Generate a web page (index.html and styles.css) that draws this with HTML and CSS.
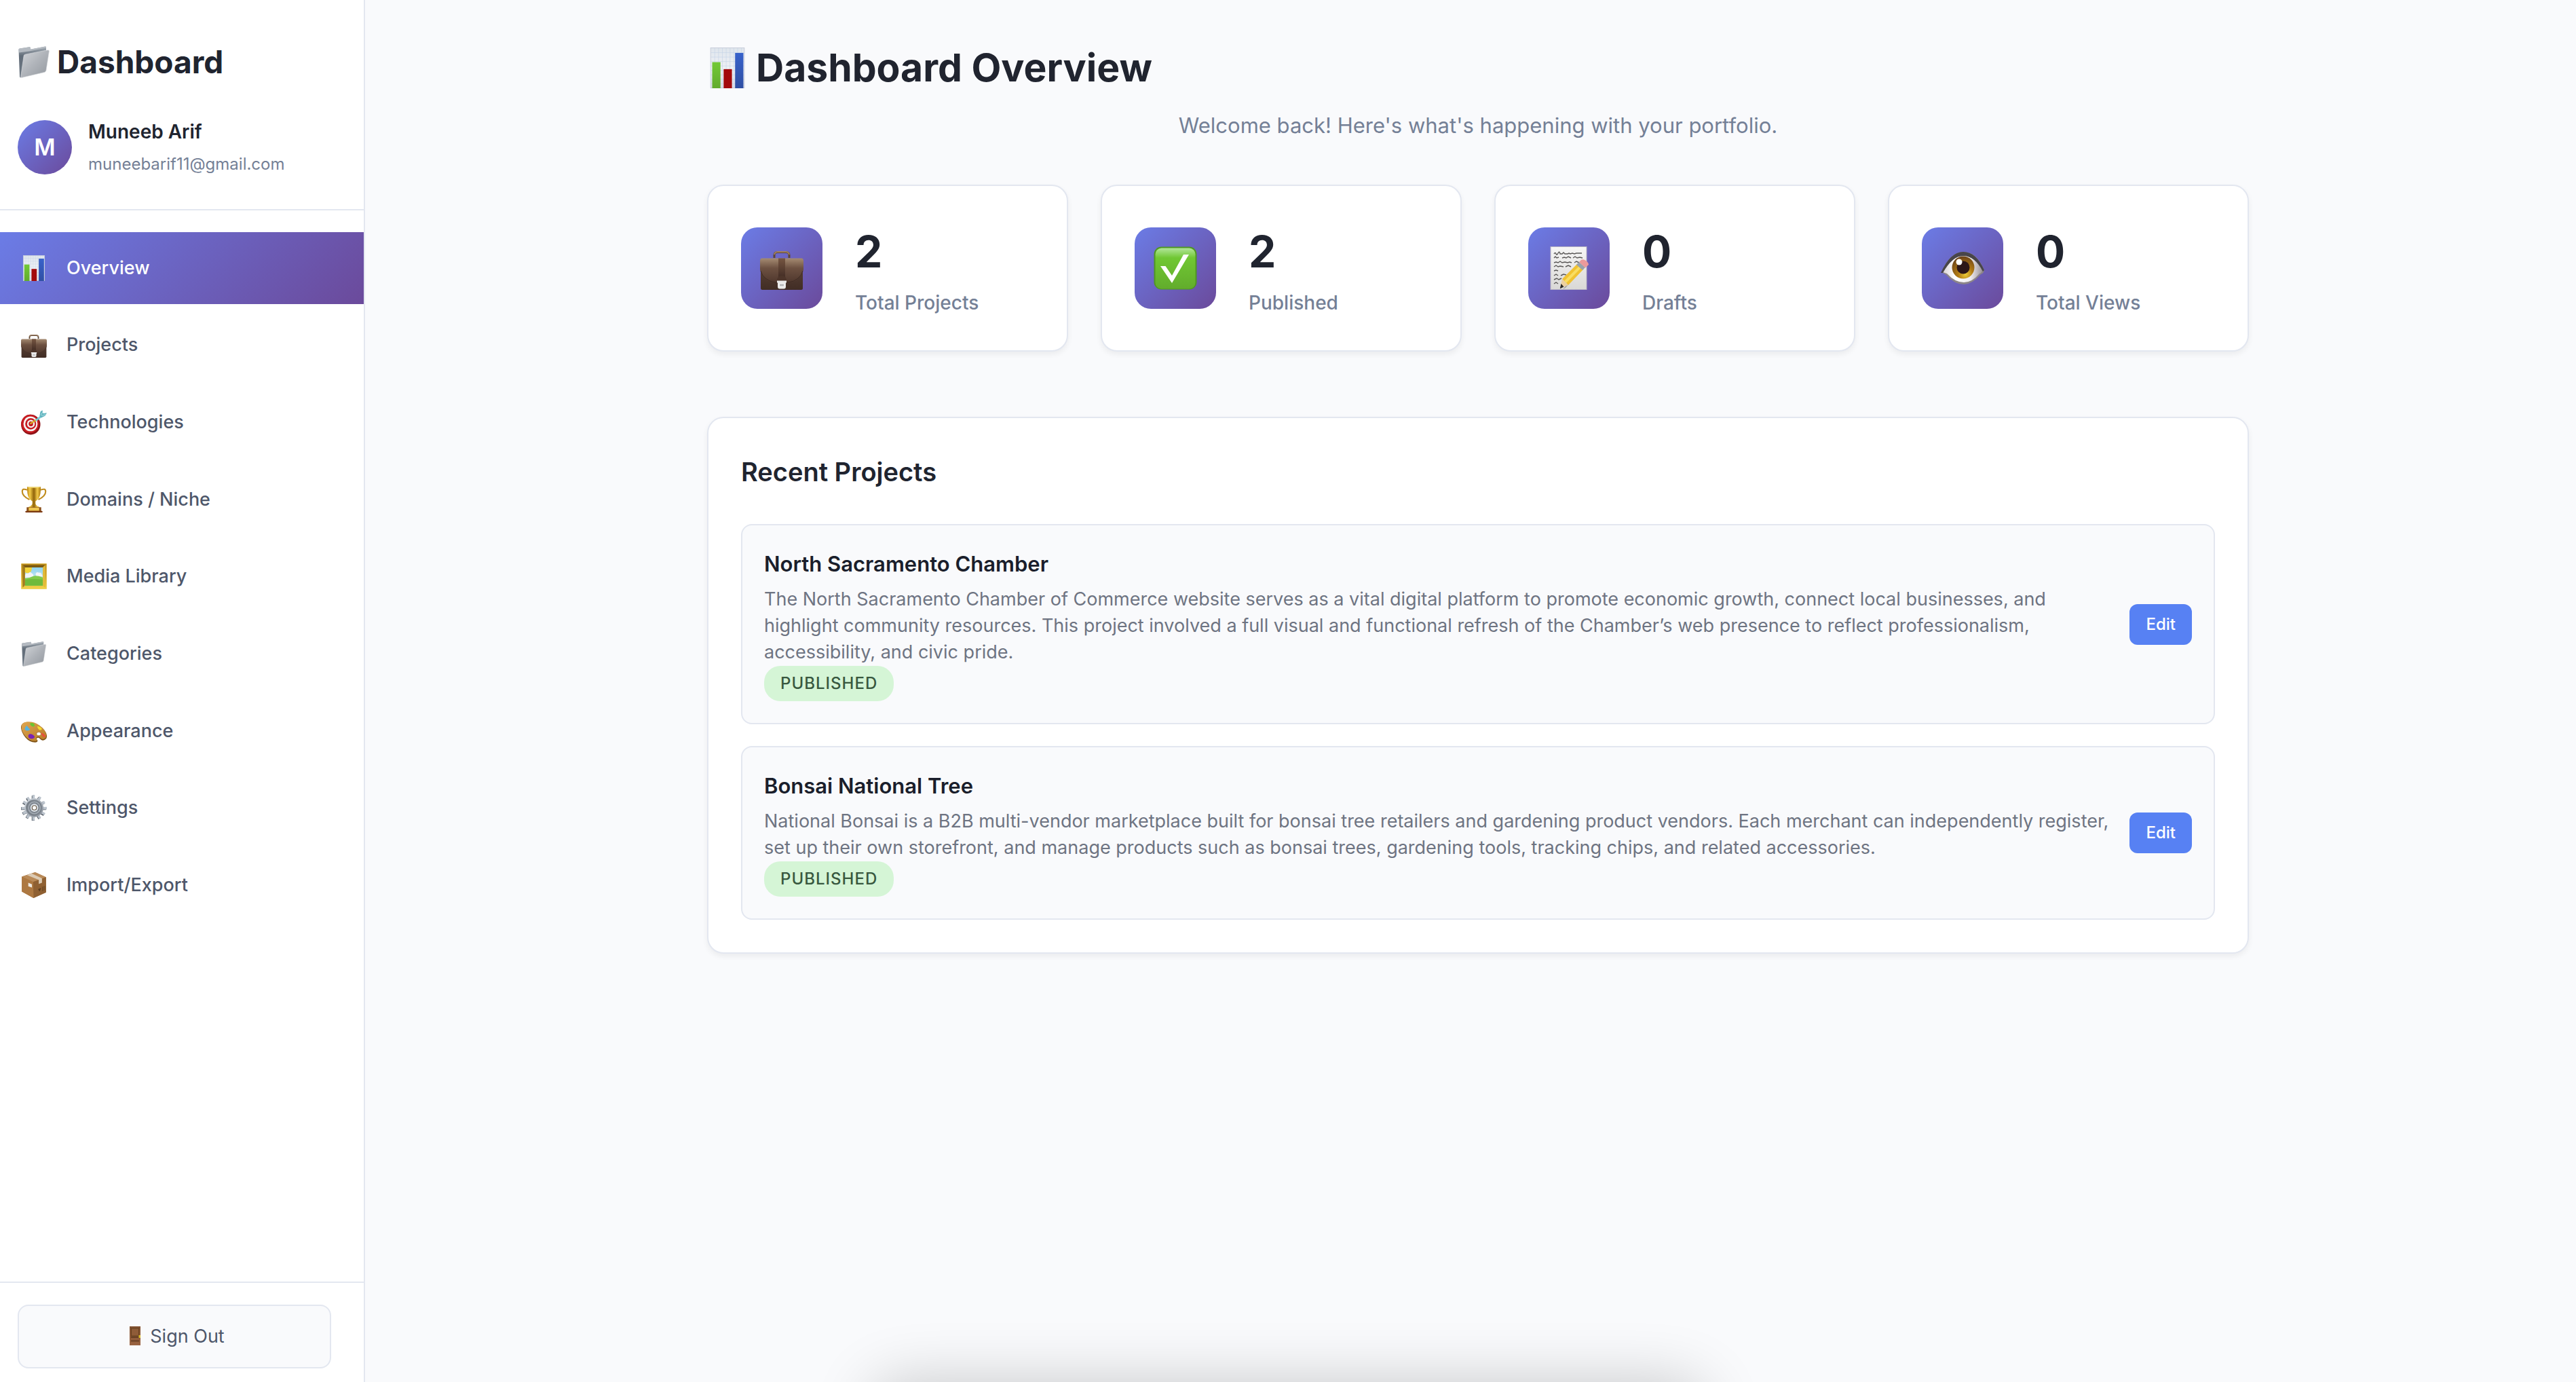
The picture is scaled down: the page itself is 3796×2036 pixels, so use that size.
FILE: index.html
```html
<!DOCTYPE html>
<html lang="en">
<head>
<meta charset="utf-8">
<meta name="viewport" content="width=device-width, initial-scale=1">
<title>Dashboard Overview</title>
<link rel="stylesheet" href="styles.css">
</head>
<body>
<svg class="sprite" width="0" height="0" aria-hidden="true">
  <defs>
    <linearGradient id="g-paper" x1="0" y1="0" x2="0" y2="1"><stop offset="0" stop-color="#dfe5ec"/><stop offset=".5" stop-color="#eef1f5"/><stop offset="1" stop-color="#dcdfe8"/></linearGradient>
    <linearGradient id="g-green" x1="0" y1="0" x2="0" y2="1"><stop offset="0" stop-color="#72c936"/><stop offset="1" stop-color="#62ab2d"/></linearGradient>
    <linearGradient id="g-blue" x1="0" y1="0" x2="0" y2="1"><stop offset="0" stop-color="#3862cb"/><stop offset="1" stop-color="#2f4fa3"/></linearGradient>
    <linearGradient id="g-folder" x1="0" y1="0" x2="1" y2="1"><stop offset="0" stop-color="#d3d6da"/><stop offset=".5" stop-color="#afb3b9"/><stop offset="1" stop-color="#92979e"/></linearGradient>
    <linearGradient id="g-folder-back" x1="0" y1="0" x2="0" y2="1"><stop offset="0" stop-color="#a9b1b9"/><stop offset=".3" stop-color="#626d79"/><stop offset="1" stop-color="#6d7884"/></linearGradient>
    <linearGradient id="g-case" x1="0" y1="0" x2="0" y2="1"><stop offset="0" stop-color="#a58b72"/><stop offset=".4" stop-color="#6d5141"/><stop offset="1" stop-color="#4f372d"/></linearGradient>
    <linearGradient id="g-case-low" x1="0" y1="0" x2="0" y2="1"><stop offset="0" stop-color="#5f4638"/><stop offset="1" stop-color="#412d25"/></linearGradient>
    <linearGradient id="g-strap" x1="0" y1="0" x2="0" y2="1"><stop offset="0" stop-color="#755541"/><stop offset="1" stop-color="#3a2620"/></linearGradient>
    <linearGradient id="g-gold" x1="0" y1="0" x2="1" y2="0"><stop offset="0" stop-color="#b57c0d"/><stop offset=".2" stop-color="#f5cf4a"/><stop offset=".5" stop-color="#8f6209"/><stop offset=".75" stop-color="#f3cb49"/><stop offset="1" stop-color="#a8740c"/></linearGradient>
    <linearGradient id="g-frame" x1="0" y1="0" x2="0" y2="1"><stop offset="0" stop-color="#b98a1c"/><stop offset=".5" stop-color="#d3a42a"/><stop offset="1" stop-color="#f2d44a"/></linearGradient>
    <linearGradient id="g-sky" x1="0" y1="0" x2="0" y2="1"><stop offset="0" stop-color="#8dd3ee"/><stop offset="1" stop-color="#e9f1f5"/></linearGradient>
    <linearGradient id="g-wood" x1="0" y1="0" x2="1" y2="1"><stop offset="0" stop-color="#e0a650"/><stop offset="1" stop-color="#b57a26"/></linearGradient>
    <linearGradient id="g-steel" x1="0" y1="0" x2="1" y2="1"><stop offset="0" stop-color="#d4dae1"/><stop offset="1" stop-color="#838b95"/></linearGradient>
    <linearGradient id="g-check" x1="0" y1="0" x2="0" y2="1"><stop offset="0" stop-color="#b2e69a"/><stop offset=".24" stop-color="#70c733"/><stop offset="1" stop-color="#62ac2c"/></linearGradient>
    <linearGradient id="g-note" x1="0" y1="0" x2="0" y2="1"><stop offset="0" stop-color="#f7f7f6"/><stop offset="1" stop-color="#d9d8d6"/></linearGradient>
    <linearGradient id="g-eye" x1="0" y1="0" x2="1" y2="0"><stop offset="0" stop-color="#d9d3d6"/><stop offset=".3" stop-color="#ffffff"/><stop offset=".7" stop-color="#f0edef"/><stop offset="1" stop-color="#9c959b"/></linearGradient>
    <radialGradient id="g-iris" cx=".6" cy=".8" r=".8"><stop offset="0" stop-color="#efce3a"/><stop offset=".4" stop-color="#b27b14"/><stop offset="1" stop-color="#6b4319"/></radialGradient>
    <linearGradient id="g-door" x1="0" y1="0" x2="0" y2="1"><stop offset="0" stop-color="#80502f"/><stop offset="1" stop-color="#9a6341"/></linearGradient>
  </defs>

  <symbol id="i-chart" viewBox="0 0 64 64">
    <rect x="5.500" y=".5" width="53" height="63" fill="url(#g-paper)" stroke="#c5cbd8"/>
    <path d="M12 1v62M18 1v62M24 1v62M30 1v62M36 1v62M42 1v62M48 1v62M54 1v62M6 8h52M6 15h52M6 22h52M6 29h52M6 36h52M6 43h52M6 50h52M6 57h52" stroke="#c3d2e6" stroke-width=".6"/>
    <rect x="8" y="23" width="13" height="41" fill="url(#g-green)"/>
    <rect x="26" y="34" width="13" height="30" fill="#a30a0c"/>
    <rect x="44" y="8.500" width="13" height="55.500" fill="url(#g-blue)"/>
  </symbol>

  <symbol id="i-folder" viewBox="0 0 64 64">
    <path d="M2 8q0-2 2-2l19-3q2 0 2 1.500v3L54 2q2-.5 2 1.500V12L12 61l-6 2q-2 0-2-2z" fill="url(#g-folder-back)"/>
    <path d="M2 8q0-2 2-2l19-3q2 0 2 1.500v3L54 2q2-.5 2 1.500v1L24 11 3 14z" fill="#b4bac1"/>
    <path d="M12 21q0-3 3-3.500L59 9q3-.5 3 2l-6 38q-.4 2.500-3 3.500L9 63q-3 1-2.700-2z" fill="url(#g-folder)" stroke="#dfe1e4" stroke-width=".8"/>
  </symbol>

  <symbol id="i-briefcase" viewBox="0 0 64 64">
    <path d="M21 17v-4q0-4.500 5-4.500h12q5 0 5 4.500v4" fill="none" stroke="#5d4636" stroke-width="3"/>
    <path d="M21 12q1-4 5-4h12q4 0 5 4" fill="none" stroke="#a07f5f" stroke-width="2"/>
    <rect x="1" y="19" width="62" height="45" rx="2.500" fill="url(#g-case-low)"/>
    <path d="M3 17.500h58q3 0 3 4v13q-1 5-5 10-6 8-16 9H21q-10-1-16-9-4-5-5-10v-13q0-4 3-4z" fill="url(#g-case)"/>
    <path d="M1 36q2 7 7 11 6 5 14 6h20q8-1 14-6 5-4 7-11" fill="none" stroke="#3e2b23" stroke-width="1"/>
    <rect x="27" y="17.500" width="10" height="33" fill="url(#g-strap)"/>
    <path d="M25 51q0-8 7-8t7 8z" fill="#4d352a"/>
    <path d="M25 50.500h14v3h-1v6q0 3-3 3h-6q-3 0-3-3v-6h-1z" fill="#e9e9e9"/>
    <path d="M28.500 55h7v4h-7z" fill="#b9babb" stroke="#fff" stroke-width=".8"/>
  </symbol>

  <symbol id="i-target" viewBox="0 0 64 64">
    <ellipse cx="24" cy="38" rx="24" ry="25" fill="#8c1216"/>
    <ellipse cx="22.500" cy="36" rx="22" ry="23" fill="#c71c22"/>
    <ellipse cx="23.500" cy="36" rx="17.500" ry="18.500" fill="#f6f3f2"/>
    <ellipse cx="24" cy="36" rx="13.500" ry="14" fill="#c71c22"/>
    <ellipse cx="24.500" cy="36" rx="9.500" ry="10" fill="#f6f3f2"/>
    <ellipse cx="24.500" cy="36" rx="5.500" ry="6" fill="#c01a20"/>
    <path d="M24 35l14-9" stroke="#d8a928" stroke-width="4" stroke-linecap="round"/>
    <path d="M35 26l14-11 3 4-14 11z" fill="#74cbd6"/>
    <path d="M46 17l2-11 5-4 1 7 2 1 8-1-4 7-10 5z" fill="#61b3be"/>
    <path d="M49 15l5-9M51 16l10-3" stroke="#b6e5ea" stroke-width="1.500"/>
  </symbol>

  <symbol id="i-trophy" viewBox="0 0 64 64">
    <path d="M15 8Q3 3 3 12q0 11 18 20M49 8q12-5 12 4 0 11-18 20" fill="none" stroke="#c08c1c" stroke-width="3.500"/>
    <path d="M15 0h34q0 20-4 27-4 7-9 9v6q1 5 9 8v3H19v-3q8-3 9-8v-6q-5-2-9-9-4-7-4-27z" fill="url(#g-gold)"/>
    <ellipse cx="32" cy="1.500" rx="17" ry="1.500" fill="#f4dd80"/>
    <rect x="14" y="51" width="36" height="10" fill="#8a4f18"/>
    <rect x="19" y="52" width="26" height="8" fill="#edc64f"/>
    <rect x="11" y="60" width="42" height="4" rx="1" fill="#7c3a12"/>
  </symbol>

  <symbol id="i-picture" viewBox="0 0 64 64">
    <rect x=".5" y=".5" width="63" height="63" rx="1.500" fill="url(#g-frame)" stroke="#e7c543"/>
    <path d="M4 4h56l-6 6H10z" fill="#7a5810"/>
    <path d="M4 4l6 6v44l-6 6z" fill="#a17a1c"/>
    <path d="M60 4l-6 6v44l6 6z" fill="#e3bb38"/>
    <rect x="10" y="10" width="44" height="45" fill="url(#g-sky)"/>
    <path d="M10 10h17q0 12-9 14-5 1-8-2z" fill="#f1d338"/>
    <path d="M10 28q3-5 8-3 5-6 9 0 4 1 4 6l-8 4H10zM36 26q3-6 8-3 6-1 7 4l3 5H38z" fill="#f2f4f5"/>
    <path d="M10 37q12-1 22-6 10-1 22 4v20H10z" fill="#82cb4b"/>
    <path d="M10 41q16-4 44-1v15H10z" fill="#6fba3b"/>
  </symbol>

  <symbol id="i-palette" viewBox="0 0 64 64">
    <g transform="translate(0 4)">
      <path d="M0 20Q-1 7 15 6q17-1 31 9 16 11 18 24 1 10-9 12-5 1-8-4-4-5-8-1-2 3 2 5 1 5-6 5-14 0-24-12Q1 32 0 20z" fill="#7c5014"/>
      <path d="M1 18Q0 7 15 5q17-1 31 9 16 12 17 24 0 9-8 10-5 1-8-4-4-4-8-1-3 4 1 6 0 4-5 4-14 0-24-12Q1 30 1 18z" fill="url(#g-wood)"/>
      <ellipse cx="44" cy="35" rx="5.500" ry="4.500" fill="#fff" stroke="#8a5c1b"/>
      <path d="M9 21q3-2 4-7 5 3 6 7 4 1 3 4-7 4-12 0z" fill="#58b3df"/>
      <path d="M22 9q6-3 10 1 4 6-1 7-7 0-9-8z" fill="#6cc531"/>
      <path d="M40 16q8 0 12 7-2 4-7 2-4-4-5-9z" fill="#f4da31"/>
      <path d="M18 42q-1-7 6-7 8 2 10 8-3 5-9 4-6 0-7-5z" fill="#7a22b4"/>
      <path d="M50 32q8 2 11 9-3 5-7 0-4-4-4-9z" fill="#e8503d"/>
    </g>
  </symbol>

  <symbol id="i-gear" viewBox="0 0 64 64">
    <g stroke="#59616b" stroke-width="7"><path d="M31 1v62M1 33h62M16 7l31 51M6 18l52 30M5 46l53-28M15 57L47 6" transform="translate(-1 1)"/></g>
    <g stroke="#bcc4cd" stroke-width="6"><path d="M31 0v63M1 33h63M16 6l31 52M6 17l53 31M5 46l54-28M15 57L48 5"/></g>
    <circle cx="32" cy="32" r="23.500" fill="url(#g-steel)"/>
    <circle cx="32" cy="32" r="20" fill="#7a828b"/>
    <circle cx="33" cy="32" r="14.500" fill="none" stroke="#a2aab3" stroke-width="3"/>
    <circle cx="33" cy="32" r="10" fill="#dbe1e7"/>
    <circle cx="33" cy="32" r="5.500" fill="#fff" stroke="#6a5c4a" stroke-width="2"/>
  </symbol>

  <symbol id="i-box" viewBox="0 0 64 64">
    <path d="M2 11L35 0l27 12v38L31 64 2 48z" fill="#a87541"/>
    <path d="M2 11L35 0l27 12-32 12z" fill="#b98a58"/>
    <path d="M30 24l32-12v38L31 64z" fill="#8f6032"/>
    <path d="M2 11l28 13 1 40L2 48z" fill="#ad7841"/>
    <path d="M15 7l11-4 26 12v11l-8 3V19z" fill="#dccbb4"/>
    <path d="M18 26l9 4v8l-9-3z" fill="#eee9e2"/>
    <path d="M43 42l6-2-3 7zM53 36v11M56 35v11M59 34v11" fill="#5b3c1e" stroke="#5b3c1e" stroke-width="1.200"/>
  </symbol>

  <symbol id="i-check" viewBox="0 0 64 64">
    <rect x=".5" y=".5" width="63" height="63" rx="11" fill="#4f9722"/>
    <rect x="2.500" y="2.500" width="59" height="60" rx="9" fill="url(#g-check)"/>
    <path d="M10 29h7.500L27 43l17-31h8L27 54z" fill="#fff"/>
  </symbol>

  <symbol id="i-memo" viewBox="0 0 64 64">
    <rect x="5" y=".5" width="53" height="63" fill="url(#g-note)" stroke="#b9b5c4"/>
    <path d="M10 11q2-3 3 0t3-1 3 1h3l2-2 2 2h4l2-1 2 1 3-1 3 1 3-1h8M10 17l2-2 2 2 3-1m5 1l3-1 3 1 3-2 4 2m3 0l3-2 3 2 4-1 4 1M10 24l3-1 3 1 3-2 3 2 4-1 4 1 3-1 3 1m4 0l3-2 4 2M10 30l3-2 3 2 3-1 5 1m3 0l4-2 4 2M10 36l3-1 3 1M10 43l3-2 3 2m4 0l4-2 4 1M10 49l4-2 3 2 4-2M10 55l3-2 3 2" fill="none" stroke="#5a5857" stroke-width="1.400"/>
    <path d="M23 63l4-2 27-30-3-1z" fill="#000" opacity=".25"/>
    <path d="M22 48L45 25l9 8-23 24z" fill="#f1c232"/>
    <path d="M25 51L48 28l3 2.500L28 54z" fill="#f9dd62"/>
    <path d="M22 48l9 9-11 4q-1-1-.5-2z" fill="#ecd0a0"/>
    <path d="M20.500 55l4 4.500-5 2.500q-1 0-.5-1z" fill="#2d2a29"/>
    <path d="M43 27l4-4 9 8-4 4z" fill="#9aa3ae"/>
    <path d="M47 23l3-3q3-2 7 1t4 6l-5 4.500z" fill="#ec9a9b"/>
  </symbol>

  <symbol id="i-eye" viewBox="0 0 64 64">
    <path d="M1 38Q14 8 33 8q20 0 31 27-1 5-5 6-13 15-25 15Q20 56 8 42z" fill="#8c8589"/>
    <path d="M3 38Q16 12 33 12q18 0 28 24-1 3-4 4-11 13-23 13-13 0-25-13z" fill="url(#g-eye)"/>
    <path d="M0 39Q14 8 33 8q19 0 31 27l-2 2Q50 14 33 14 17 14 3 39z" fill="#48454a"/>
    <ellipse cx="33" cy="31" rx="16.500" ry="16.500" fill="url(#g-iris)"/>
    <circle cx="33" cy="31" r="9.500" fill="#2d1718"/>
    <circle cx="27" cy="23" r="4.500" fill="#fff"/>
  </symbol>

  <symbol id="i-door" viewBox="0 0 32 32">
    <rect x="8" y="1" width="16" height="28" fill="url(#g-door)"/>
    <rect x="10.500" y="4" width="11" height="11" fill="#8f5c38" stroke="#65401f" stroke-width="1"/>
    <path d="M10 17h12M10 22.500h12" stroke="#5b381f" stroke-width="1.500"/>
    <rect x="21.500" y="14" width="2.500" height="4" fill="#dcc02e"/>
  </symbol>
</svg>

<div class="layout">
  <aside class="sidebar">
    <header class="sidebar-head">
      <div class="brand"><svg class="icon-brand" aria-hidden="true"><use href="#i-folder"/></svg>Dashboard</div>
      <div class="user">
        <div class="avatar">M</div>
        <div class="user-text">
          <div class="user-name">Muneeb Arif</div>
          <div class="user-mail">muneebarif11@gmail.com</div>
        </div>
      </div>
    </header>
    <nav class="nav">
      <a class="nav-item active" href="#overview"><svg class="icon-nav" aria-hidden="true"><use href="#i-chart"/></svg>Overview</a>
      <a class="nav-item" href="#projects"><svg class="icon-nav" aria-hidden="true"><use href="#i-briefcase"/></svg>Projects</a>
      <a class="nav-item" href="#technologies"><svg class="icon-nav" aria-hidden="true"><use href="#i-target"/></svg>Technologies</a>
      <a class="nav-item" href="#domains"><svg class="icon-nav" aria-hidden="true"><use href="#i-trophy"/></svg>Domains / Niche</a>
      <a class="nav-item" href="#media"><svg class="icon-nav" aria-hidden="true"><use href="#i-picture"/></svg>Media Library</a>
      <a class="nav-item" href="#categories"><svg class="icon-nav" aria-hidden="true"><use href="#i-folder"/></svg>Categories</a>
      <a class="nav-item" href="#appearance"><svg class="icon-nav" aria-hidden="true"><use href="#i-palette"/></svg>Appearance</a>
      <a class="nav-item" href="#settings"><svg class="icon-nav" aria-hidden="true"><use href="#i-gear"/></svg>Settings</a>
      <a class="nav-item" href="#import-export"><svg class="icon-nav" aria-hidden="true"><use href="#i-box"/></svg>Import/Export</a>
    </nav>
    <footer class="sidebar-foot">
      <button class="sign-out" type="button"><svg class="icon-door" aria-hidden="true"><use href="#i-door"/></svg>Sign Out</button>
    </footer>
  </aside>

  <main class="main">
    <h1 class="page-title"><svg class="icon-title" aria-hidden="true"><use href="#i-chart"/></svg>Dashboard Overview</h1>
    <p class="page-sub">Welcome back! Here's what's happening with your portfolio.</p>

    <section class="stats">
      <div class="stat">
        <div class="tile"><svg class="icon-tile" aria-hidden="true"><use href="#i-briefcase"/></svg></div>
        <div><div class="stat-value">2</div><div class="stat-label">Total Projects</div></div>
      </div>
      <div class="stat">
        <div class="tile"><svg class="icon-tile" aria-hidden="true"><use href="#i-check"/></svg></div>
        <div><div class="stat-value">2</div><div class="stat-label">Published</div></div>
      </div>
      <div class="stat">
        <div class="tile"><svg class="icon-tile" aria-hidden="true"><use href="#i-memo"/></svg></div>
        <div><div class="stat-value">0</div><div class="stat-label">Drafts</div></div>
      </div>
      <div class="stat">
        <div class="tile"><svg class="icon-tile" aria-hidden="true"><use href="#i-eye"/></svg></div>
        <div><div class="stat-value">0</div><div class="stat-label">Total Views</div></div>
      </div>
    </section>

    <section class="panel">
      <h2 class="panel-title">Recent Projects</h2>
      <div class="projects">
        <article class="project">
          <div class="project-text">
            <h3 class="project-name">North Sacramento Chamber</h3>
            <p class="project-desc">The North Sacramento Chamber of Commerce website serves as a vital digital platform to promote economic growth, connect local businesses, and highlight community resources. This project involved a full visual and functional refresh of the Chamber’s web presence to reflect professionalism, accessibility, and civic pride.</p>
            <span class="badge">PUBLISHED</span>
          </div>
          <button class="edit" type="button">Edit</button>
        </article>
        <article class="project">
          <div class="project-text">
            <h3 class="project-name">Bonsai National Tree</h3>
            <p class="project-desc">National Bonsai is a B2B multi-vendor marketplace built for bonsai tree retailers and gardening product vendors. Each merchant can independently register, set up their own storefront, and manage products such as bonsai trees, gardening tools, tracking chips, and related accessories.</p>
            <span class="badge">PUBLISHED</span>
          </div>
          <button class="edit" type="button">Edit</button>
        </article>
      </div>
    </section>
  </main>
</div>
<div class="bottom-shade" aria-hidden="true"></div>
</body>
</html>
```
FILE: styles.css
```css
* { box-sizing: border-box; }

body {
  margin: 0;
  background: #f9fafc;
  color: #20242f;
  font-family: Inter, "Liberation Sans", sans-serif;
  font-size: 28px;
  line-height: 44px;
}

h1, h2, h3, p { margin: 0; }
button { font: inherit; cursor: pointer; }
svg { display: block; flex: none; }
.sprite { position: absolute; }

.layout {
  display: grid;
  grid-template-columns: 560px 1fr;
  min-height: 100vh;
}

/* Sidebar */
.sidebar {
  display: flex;
  flex-direction: column;
  width: 538px;
  background: #fff;
  border-right: 2px solid #e3e7f0;
}

.sidebar-head {
  padding: 50px 26px 46px;
  border-bottom: 2px solid #e3e7f0;
}

.brand {
  display: flex;
  align-items: center;
  gap: 10px;
  margin-bottom: 40px;
  font-size: 46px;
  line-height: 82px;
  font-weight: 700;
}
.icon-brand { width: 48px; height: 48px; }

.user { display: flex; align-items: center; gap: 24px; }
.user-text { display: grid; gap: 6px; }
.avatar {
  display: flex;
  align-items: center;
  justify-content: center;
  width: 80px;
  height: 80px;
  border-radius: 50%;
  background: linear-gradient(135deg, #6b7ce6, #6b4a9b);
  color: #fff;
  font-size: 34px;
  font-weight: 600;
}
.user-name { font-weight: 600; }
.user-mail { font-size: 24px; line-height: 40px; color: #748096; }

.nav {
  display: grid;
  grid-auto-rows: 1fr;
  gap: 8px;
  height: 1015px;
  margin: 32px 0;
}
.nav-item {
  display: flex;
  align-items: center;
  gap: 29px;
  padding: 0 31px;
  color: #4e576a;
  font-size: 27px;
  font-weight: 500;
  text-decoration: none;
}
.nav-item.active {
  background: linear-gradient(135deg, #6b7ce6, #6b4a9b);
  color: #fff;
}
.icon-nav { width: 38px; height: 38px; }

.sidebar-foot {
  margin-top: auto;
  padding: 32px 48px 20px 26px;
  border-top: 2px solid #e3e7f0;
}
.sign-out {
  display: flex;
  align-items: center;
  justify-content: center;
  gap: 6px;
  width: 100%;
  height: 94px;
  border: 2px solid #e3e7f0;
  border-radius: 16px;
  background: #f9fafc;
  color: #4e576a;
  font-size: 27px;
}
.icon-door { width: 32px; height: 32px; }

/* Main column */
.main {
  width: 100%;
  max-width: 2400px;
  margin: 0 auto;
  padding: 50px 64px;
}
.page-title {
  display: flex;
  align-items: center;
  gap: 12px;
  font-size: 57px;
  line-height: 100px;
  font-weight: 700;
}
.icon-title { width: 60px; height: 60px; }
.page-sub {
  margin: 9px 0 61px;
  color: #748096;
  font-size: 31px;
  line-height: 52px;
  text-align: center;
}

.stats {
  display: grid;
  grid-template-columns: repeat(4, 1fr);
  gap: 48px;
  margin-bottom: 96px;
}
.stat {
  display: flex;
  align-items: center;
  gap: 48px;
  padding: 48px;
  border: 2px solid #e3e7f0;
  border-radius: 24px;
  background: #fff;
  box-shadow: 0 4px 8px rgba(0, 0, 0, 0.06);
}
.tile {
  display: flex;
  align-items: center;
  justify-content: center;
  width: 120px;
  height: 120px;
  border-radius: 24px;
  background: linear-gradient(135deg, #6b7ce6, #6b4a9b);
}
.icon-tile { width: 64px; height: 64px; }
.stat-value { margin-bottom: 4px; font-size: 64px; line-height: 98px; font-weight: 700; }
.stat-label { color: #748096; font-weight: 500; }

.panel {
  padding: 48px;
  border: 2px solid #e3e7f0;
  border-radius: 24px;
  background: #fff;
  box-shadow: 0 4px 8px rgba(0, 0, 0, 0.06);
}
.panel-title {
  margin-bottom: 46px;
  font-size: 38px;
  line-height: 62px;
  font-weight: 600;
}
.projects { display: grid; gap: 32px; }
.project {
  display: flex;
  align-items: center;
  gap: 16px;
  padding: 32px;
  border: 2px solid #e3e7f0;
  border-radius: 16px;
  background: #f9fafc;
}
.project-text { flex: 1; }
.project-name {
  margin-bottom: 7px;
  color: #1a1e2b;
  font-size: 31px;
  line-height: 50px;
  font-weight: 600;
}
.project-desc {
  margin-bottom: 1px;
  color: #6e7482;
  font-size: 27px;
  line-height: 39px;
}
.badge {
  display: block;
  width: fit-content;
  padding: 0 24px;
  border-radius: 24px;
  background: #d5f5d6;
  color: #38583f;
  font-size: 24px;
  line-height: 52px;
  font-weight: 500;
  letter-spacing: 1px;
}
.edit {
  flex: none;
  height: 60px;
  padding: 0 24px;
  border: 0;
  border-radius: 12px;
  background: #5781f3;
  color: #fff;
  font-size: 24px;
  font-weight: 500;
}

/* Soft shade rising from the bottom edge of the window */
.bottom-shade {
  position: fixed;
  right: 0;
  bottom: -200px;
  left: 0;
  width: 1226px;
  height: 200px;
  margin: 0 auto;
  border-radius: 40px;
  box-shadow: 0 0 90px rgba(0, 0, 0, 0.2);
  pointer-events: none;
}
```
